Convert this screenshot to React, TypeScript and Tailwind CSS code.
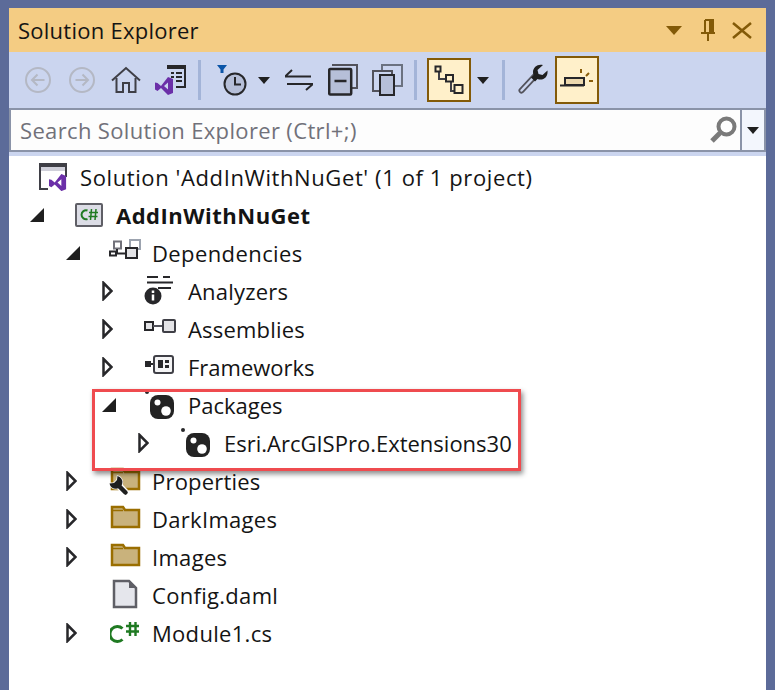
import React from "react";

const FONT = "font-['Open_Sans','Noto_Sans',sans-serif]";

function BackIcon({ flip }: { flip?: boolean }) {
  return (
    <svg width="28" height="28" viewBox="0 0 28 28" fill="none" stroke="#b4b8c4" strokeWidth="2">
      <circle cx="14" cy="14" r="12" />
      {flip ? <path d="M7.5 14h12M14.5 8.5l5.5 5.5-5.5 5.5" /> : <path d="M20.5 14h-12M13.5 8.5L8 14l5.5 5.5" />}
    </svg>
  );
}

function HomeIcon() {
  return (
    <svg width="30" height="28" viewBox="0 0 30 28" fill="none" stroke="#3f3f46" strokeWidth="2">
      <path d="M1 14.500L15 2l14 12.500" />
      <path d="M5.500 12v14h6.500v-9h6v9h6.500V12" fill="#cbd5ef" />
    </svg>
  );
}

function VsGlyph({ x = 0, y = 0, s = 1 }: { x?: number; y?: number; s?: number }) {
  return (
    <g transform={`translate(${x} ${y}) scale(${s})`}>
      <path d="M13 0l5 2v14l-5 2-7-7-3.500 3L0 12.500V5.500L2.500 6l3.500 3zM13 5.500L9 9l4 3.500z" fill="#6b2fa8" fillRule="evenodd" />
    </g>
  );
}

function VsPagesIcon() {
  return (
    <svg width="32" height="32" viewBox="0 0 32 32" fill="none">
      <path d="M13 2h18v21H22" fill="#cbd5ef" stroke="#27272a" strokeWidth="2" />
      <rect x="13" y="1" width="18" height="4" fill="#27272a" />
      <path d="M17 9h3M22 9h6M17 13h3M22 13h6M22 17h6" stroke="#27272a" strokeWidth="2" />
      <VsGlyph x={1} y={13} s={1} />
    </svg>
  );
}

function HistoryIcon() {
  return (
    <svg width="30" height="32" viewBox="0 0 30 32" fill="none">
      <path d="M0 1h10L6.500 5.500V9h-3V5.500z" fill="#0b55a8" />
      <circle cx="18" cy="20" r="10.500" fill="#b6bfd8" stroke="#27272a" strokeWidth="2" />
      <path d="M18 13v7.500h6" stroke="#27272a" strokeWidth="2" />
    </svg>
  );
}

function Caret({ color = "#1f1f1f", w = 12, h = 7 }: { color?: string; w?: number; h?: number }) {
  return (
    <svg width={w} height={h} viewBox="0 0 12 7" preserveAspectRatio="none">
      <path d="M0 0h12L6 7z" fill={color} />
    </svg>
  );
}

function SyncIcon() {
  return (
    <svg width="28" height="22" viewBox="0 0 28 22" fill="none" stroke="#27272a" strokeWidth="2">
      <path d="M0 7.500h26M0 7.500l7-6.500" />
      <path d="M28 15H2M28 15l-7 6" />
    </svg>
  );
}

function CollapseIcon() {
  return (
    <svg width="30" height="32" viewBox="0 0 30 32" fill="none">
      <path d="M4 1h25v23h-5" stroke="#52525b" strokeWidth="2" />
      <rect x="1.200" y="5" width="22" height="25.500" rx="1" fill="#b6bfd8" stroke="#27272a" strokeWidth="2.500" />
      <path d="M6.500 17h12" stroke="#27272a" strokeWidth="2.500" />
    </svg>
  );
}

function CopyIcon() {
  return (
    <svg width="32" height="32" viewBox="0 0 32 32" fill="none">
      <rect x="11" y="1" width="20" height="21" fill="#cbd5ef" stroke="#6b7280" strokeWidth="2" />
      <rect x="2" y="7" width="19" height="20" fill="#cbd5ef" stroke="#52525b" strokeWidth="2" />
      <rect x="9" y="11" width="14" height="20" fill="#b6bfd8" stroke="#27272a" strokeWidth="2" />
    </svg>
  );
}

function TreeToggleIcon() {
  return (
    <svg width="30" height="30" viewBox="0 0 30 30" fill="none">
      <path d="M5 8v7h8M17 18v9h7" stroke="#3f3f46" strokeWidth="2" transform="translate(0 -1)" />
      <rect x="1.500" y="1.500" width="5" height="5" fill="#fff0ca" stroke="#27272a" strokeWidth="2" />
      <rect x="12" y="10" width="7" height="6.500" fill="#fff0ca" stroke="#27272a" strokeWidth="2" />
      <rect x="20.500" y="20" width="8" height="8" fill="#fff0ca" stroke="#27272a" strokeWidth="2" />
    </svg>
  );
}

function WrenchIcon() {
  return (
    <svg width="30" height="32" viewBox="0 0 30 32" fill="none">
      <path d="M3.500 26.500L17 12" stroke="#52525b" strokeWidth="6" strokeLinecap="round" />
      <path d="M3.500 26.500L17 12" stroke="#cbd5ef" strokeWidth="2.500" strokeLinecap="round" />
      <path d="M25 1c-5-1.500-10 2-10 7 0 1 .2 2 .6 3L13 13.500l4 4 2.500-2.500c1 .4 2 .6 3 .6 4.500 0 7.500-4 7-9l-5 4.500-4-1-1-4z" fill="#1f1f1f" />
    </svg>
  );
}

function PreviewIcon() {
  return (
    <svg width="34" height="30" viewBox="0 0 34 30">
      <path d="M5 20h19v-7H5z" fill="#ecd8ae" stroke="#27272a" strokeWidth="2" />
      <path d="M0 20.500h24" stroke="#27272a" strokeWidth="2" />
      <path d="M21 4v4M26 11l3-3M29 16h4" stroke="#8a5d0a" strokeWidth="2" />
    </svg>
  );
}

function SearchIcon() {
  return (
    <svg width="28" height="28" viewBox="0 0 28 28" fill="none">
      <circle cx="17.500" cy="10.500" r="8" stroke="#7a7a7a" strokeWidth="4" fill="#fff" />
      <path d="M11 17L3 25" stroke="#7a7a7a" strokeWidth="5" />
    </svg>
  );
}

function SolutionIcon() {
  return (
    <svg width="28" height="28" viewBox="0 0 28 28" fill="none">
      <path d="M9 26H1V1h26v13" fill="#fff" stroke="#3f3f46" strokeWidth="2" />
      <rect x="1" y="1" width="26" height="3" fill="#3f3f46" />
      <rect x="2" y="4" width="24" height="4" fill="#d0d0da" />
      <VsGlyph x={10} y={11} s={0.95} />
    </svg>
  );
}

function ProjectIcon() {
  return (
    <svg width="28" height="24" viewBox="0 0 28 24" fill="none" className="ml-[3px]">
      <rect x="1" y="1" width="26" height="22" rx="1" fill="#dcdde6" stroke="#5f5f66" strokeWidth="2" />
      <path d="M12.500 7.500A4.500 4.500 0 1 0 12.500 16" stroke="#1f7a22" strokeWidth="2" />
      <path d="M16.500 6l-1 11M21 6l-1 11M14 9.500h9M13.500 13.500h9" stroke="#1f7a22" strokeWidth="1.500" />
    </svg>
  );
}

function DependenciesIcon() {
  return (
    <svg width="32" height="28" viewBox="0 0 32 28" fill="none" className="ml-[1px]">
      <rect x="5" y="2.500" width="7" height="7" fill="#fff" stroke="#71717a" strokeWidth="2" />
      <rect x="21" y="1" width="10" height="9" fill="#fff" stroke="#9ca3af" strokeWidth="2" />
      <path d="M8 10v4M8 14.500h9" stroke="#27272a" strokeWidth="2" />
      <rect x="1" y="12.500" width="6" height="4" fill="#fff" stroke="#27272a" strokeWidth="2" />
      <rect x="17" y="9" width="11" height="10" fill="#e4e4e7" stroke="#27272a" strokeWidth="2" />
    </svg>
  );
}

function AnalyzersIcon() {
  return (
    <svg width="30" height="30" viewBox="0 0 30 30" fill="none">
      <path d="M3 1h11M19 1h7M3 6.500h26M14 12h13" stroke="#27272a" strokeWidth="2" />
      <circle cx="9" cy="20" r="8.500" fill="#27272a" />
      <path d="M9 14.500v2.500M9 18.500v6" stroke="#fff" strokeWidth="2.500" />
    </svg>
  );
}

function AssembliesIcon() {
  return (
    <svg width="32" height="24" viewBox="0 0 32 24" fill="none">
      <rect x="1" y="5" width="8" height="8" fill="#e4e4e7" stroke="#27272a" strokeWidth="2" />
      <path d="M9 9h10" stroke="#52525b" strokeWidth="2" />
      <rect x="19" y="3" width="12" height="12" rx="1" fill="#e4e4e7" stroke="#3f3f46" strokeWidth="2" />
    </svg>
  );
}

function FrameworksIcon() {
  return (
    <svg width="30" height="26" viewBox="0 0 30 26" fill="none" className="ml-[1px]">
      <rect x="0" y="7" width="6" height="6" fill="#27272a" />
      <path d="M6 10h4" stroke="#27272a" strokeWidth="2" />
      <rect x="9" y="2" width="19" height="17" rx="2" fill="#f4f4f5" stroke="#3f3f46" strokeWidth="2" />
      <rect x="13" y="6" width="5" height="8" fill="#27272a" />
      <rect x="20" y="6" width="4" height="3" fill="#27272a" />
      <rect x="20" y="11" width="4" height="3" fill="#27272a" />
    </svg>
  );
}

function PackageIcon() {
  return (
    <svg width="30" height="30" viewBox="0 0 30 30" className="ml-[1px]">
      <circle cx="2" cy="2" r="2" fill="#27272a" />
      <rect x="5" y="5" width="24" height="24" rx="8" fill="#232323" />
      <circle cx="12.500" cy="12.500" r="3" fill="#fff" />
      <circle cx="21" cy="21" r="4.800" fill="#fff" />
    </svg>
  );
}

function FolderIcon({ wrench }: { wrench?: boolean }) {
  return (
    <svg width="32" height="32" viewBox="0 0 32 32" fill="none" className="ml-[1px]">
      <path d="M3 4h11l2 3h14v17H3z" fill="#c9b27c" stroke="#9a6e00" strokeWidth="2.500" />
      <path d="M3 7.500h11" stroke="#9a6e00" strokeWidth="1.500" />
      {wrench && (
        <g>
          <path d="M8 19l8.500 8.500" stroke="#fff" strokeWidth="7" />
          <path d="M8.500 11A6.500 6.500 0 1 1 .5 18.500L5 18l3-3z" fill="#1f1f1f" stroke="#fff" strokeWidth="1.500" paintOrder="stroke" />
          <path d="M8 19l8.500 8.500" stroke="#1f1f1f" strokeWidth="4.500" strokeLinecap="round" />
        </g>
      )}
    </svg>
  );
}

function FileIcon() {
  return (
    <svg width="26" height="32" viewBox="0 0 26 32" className="ml-[4px]">
      <path d="M2 2h15l7 7v19H2z" fill="#e5e6ec" stroke="#5f5f66" strokeWidth="2.500" />
      <path d="M17 1l8 8h-8z" fill="#5f5f66" />
    </svg>
  );
}

function CsIcon() {
  return (
    <svg width="30" height="24" viewBox="0 0 30 24" fill="none" className="ml-[2px]">
      <path d="M12.500 7.500A7.500 7.500 0 1 0 12.500 18.500" stroke="#1f7a22" strokeWidth="3" />
      <path d="M20 1v14M25.500 1v14M16 5h13M16 10.500h13" stroke="#1f7a22" strokeWidth="2.400" />
    </svg>
  );
}

function Arrow({ open }: { open?: boolean }) {
  if (open) {
    return (
      <svg width="14" height="14" viewBox="0 0 14 14">
        <path d="M14 0v14H0z" fill="#1f1f1f" />
      </svg>
    );
  }
  return (
    <svg width="11" height="20" viewBox="0 0 11 20" fill="none">
      <path d="M1.500 2l8 8-8 8z" stroke="#27272a" strokeWidth="2.500" fill="#fff" />
    </svg>
  );
}

function ToolButton({ children, className = "w-[44px]" }: { children?: React.ReactNode; className?: string }) {
  return <div className={`flex h-[44px] items-center justify-center ${className}`}>{children}</div>;
}

function Separator({ className = "" }: { className?: string }) {
  return <div className={`h-[40px] w-[3px] bg-[#a3b4d8] ${className}`} />;
}

function Row({ pad, arrow, icon, bold, track, children }: {
  pad: string; arrow?: "open" | "closed"; icon: React.ReactNode; bold?: boolean; track?: string; children: React.ReactNode;
}) {
  return (
    <div className={`flex h-[38px] items-center text-[#141414] ${pad}`}>
      <div className="flex w-[42px] shrink-0 items-center">
        {arrow && <Arrow open={arrow === "open"} />}
      </div>
      <div className="flex w-[44px] shrink-0 items-center">{icon}</div>
      <span className={`${bold ? "font-bold" : ""} ${track ?? ""}`}>{children}</span>
    </div>
  );
}

export default function App() {
  return (
    <div className={`flex h-[690px] w-[775px] flex-col overflow-hidden bg-[#5c6b99] pl-[9px] pr-[9px] pt-[8px] text-[22px] leading-none ${FONT}`}>
      <div className="flex h-[44px] shrink-0 items-center bg-[#f4cc83] pl-[9px] pr-[14px] text-[#141414]">
        <span className="flex-1 tracking-[0.25px]">Solution Explorer</span>
        <Caret color="#835a08" w={16} h={9} />
        <svg width="14" height="22" viewBox="0 0 14 22" fill="none" stroke="#835a08" strokeWidth="2" className="ml-[19px]">
          <path d="M4 1h8v12" />
          <path d="M9 1h3v12H9z" fill="#835a08" />
          <path d="M4 1v12M0 14h14M7 14v8" />
        </svg>
        <svg width="20" height="17" viewBox="0 0 20 17" fill="none" stroke="#835a08" strokeWidth="2.500" className="ml-[17px]">
          <path d="M1 1l18 15M19 1L1 16" />
        </svg>
      </div>

      <div className="flex h-[56px] shrink-0 items-center bg-[#cbd5ef] pl-[7px]">
        <ToolButton><BackIcon /></ToolButton>
        <ToolButton><BackIcon flip /></ToolButton>
        <ToolButton><HomeIcon /></ToolButton>
        <ToolButton><VsPagesIcon /></ToolButton>
        <Separator className="ml-[6px] mr-[9px]" />
        <ToolButton><HistoryIcon /></ToolButton>
        <div className="ml-[4px]"><Caret /></div>
        <ToolButton className="ml-[7px] w-[44px]"><SyncIcon /></ToolButton>
        <ToolButton><CollapseIcon /></ToolButton>
        <ToolButton><CopyIcon /></ToolButton>
        <Separator className="ml-[5px] mr-[10px]" />
        <ToolButton className="w-[44px] border-[2px] border-[#835a08] bg-[#fff0ca]"><TreeToggleIcon /></ToolButton>
        <div className="ml-[6px] mr-[13px]"><Caret /></div>
        <Separator className="mr-[6px]" />
        <ToolButton><WrenchIcon /></ToolButton>
        <div className="flex h-[48px] w-[44px] items-center justify-center border-[2px] border-[#835a08] bg-[#fff0ca]"><PreviewIcon /></div>
      </div>

      <div className="flex h-[44px] shrink-0 border-y-[2px] border-x-[2px] border-[#8a93a8] bg-[#fdfdfd]">
        <span className="flex-1 self-center pl-[9px] tracking-[0.35px] text-[#71717a]">Search Solution Explorer (Ctrl+;)</span>
        <div className="flex w-[29px] items-center justify-center"><SearchIcon /></div>
        <div className="ml-[3px] flex w-[24px] items-center justify-center border-l-[2px] border-[#8a93a8] bg-[#f3f6fd]"><Caret /></div>
      </div>

      <div className="h-[4px] shrink-0 bg-[#cbd5ef]" />

      <div className="flex-1 bg-white pt-[2px]">
        <div className="flex h-[38px] items-center pl-[30px] text-[#141414]">
          <div className="flex w-[41px] shrink-0 items-center"><SolutionIcon /></div>
          <span className="tracking-[0.6px]">Solution 'AddInWithNuGet' (1 of 1 project)</span>
        </div>
        <Row pad="pl-[21px]" arrow="open" bold track="tracking-[0.5px]" icon={<ProjectIcon />}>AddInWithNuGet</Row>
        <Row pad="pl-[57px]" arrow="open" track="tracking-[0.4px]" icon={<DependenciesIcon />}>Dependencies</Row>
        <Row pad="pl-[93px]" arrow="closed" track="tracking-[0.2px]" icon={<AnalyzersIcon />}>Analyzers</Row>
        <Row pad="pl-[93px]" arrow="closed" track="tracking-[0.2px]" icon={<AssembliesIcon />}>Assemblies</Row>
        <Row pad="pl-[93px]" arrow="closed" icon={<FrameworksIcon />}>Frameworks</Row>
        <div className="relative">
          <Row pad="pl-[93px]" arrow="open" icon={<PackageIcon />}>Packages</Row>
          <Row pad="pl-[129px]" arrow="closed" icon={<PackageIcon />}>Esri.ArcGISPro.Extensions30</Row>
          <div className="absolute left-[83px] top-[3px] h-[82px] w-[429px] border-[3px] border-[#ef4b4f] shadow-[2px_3px_5px_rgba(0,0,0,0.45)]" />
        </div>
        <Row pad="pl-[57px]" arrow="closed" track="tracking-[0.2px]" icon={<FolderIcon wrench />}>Properties</Row>
        <Row pad="pl-[57px]" arrow="closed" track="tracking-[0.3px]" icon={<FolderIcon />}>DarkImages</Row>
        <Row pad="pl-[57px]" arrow="closed" track="tracking-[0.3px]" icon={<FolderIcon />}>Images</Row>
        <Row pad="pl-[57px]" track="tracking-[0.3px]" icon={<FileIcon />}>Config.daml</Row>
        <Row pad="pl-[57px]" arrow="closed" track="tracking-[0.3px]" icon={<CsIcon />}>Module1.cs</Row>
      </div>
    </div>
  );
}
